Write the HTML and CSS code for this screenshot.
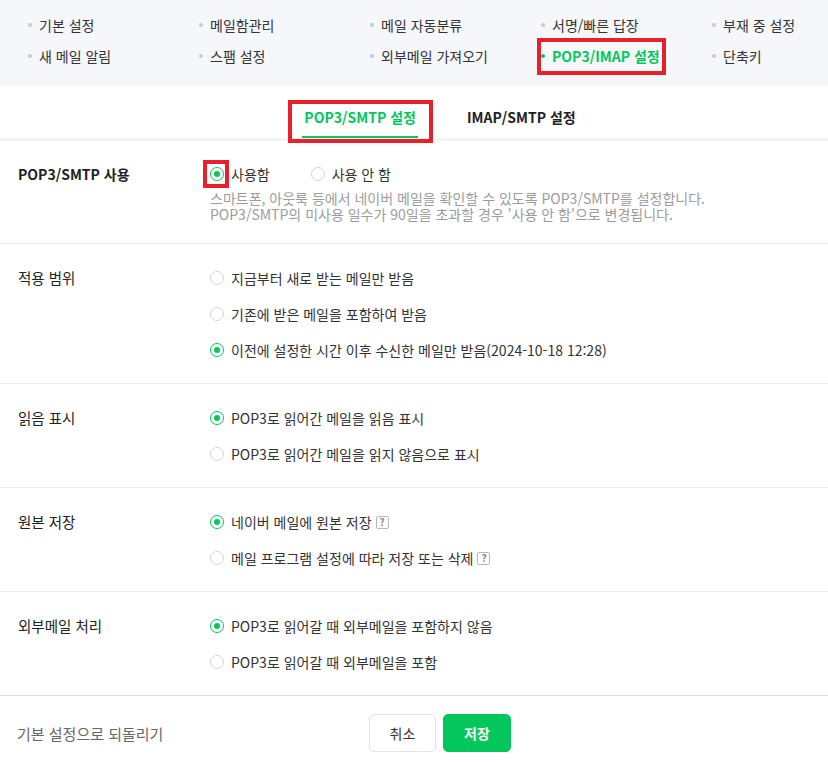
FILE: index.html
```html
<!DOCTYPE html>
<html lang="ko">
<head>
<meta charset="utf-8">
<title>POP3/IMAP 설정</title>
<link rel="stylesheet" href="styles.css">
</head>
<body>
<div class="page">
  <nav class="menu">
    <a class="menu-item">기본 설정</a>
    <a class="menu-item">메일함관리</a>
    <a class="menu-item">메일 자동분류</a>
    <a class="menu-item">서명/빠른 답장</a>
    <a class="menu-item">부재 중 설정</a>
    <a class="menu-item">새 메일 알림</a>
    <a class="menu-item">스팸 설정</a>
    <a class="menu-item">외부메일 가져오기</a>
    <a class="menu-item active marked">POP3/IMAP 설정</a>
    <a class="menu-item">단축키</a>
  </nav>

  <div class="tabs">
    <a class="tab active marked">POP3/SMTP 설정</a>
    <a class="tab">IMAP/SMTP 설정</a>
  </div>

  <section class="row row-first">
    <div class="label label-strong">POP3/SMTP 사용</div>
    <div class="field">
      <div class="inline-options">
        <label class="opt opt-short"><span class="radio on marked"></span><span class="opt-text">사용함</span></label>
        <label class="opt opt-short"><span class="radio"></span><span class="opt-text">사용 안 함</span></label>
      </div>
      <p class="desc">스마트폰, 아웃룩 등에서 네이버 메일을 확인할 수 있도록 POP3/SMTP를 설정합니다.</p>
      <p class="desc">POP3/SMTP의 미사용 일수가 90일을 초과할 경우 '사용 안 함'으로 변경됩니다.</p>
    </div>
  </section>

  <section class="row">
    <div class="label">적용 범위</div>
    <div class="field">
      <label class="opt"><span class="radio"></span><span class="opt-text">지금부터 새로 받는 메일만 받음</span></label>
      <label class="opt"><span class="radio"></span><span class="opt-text">기존에 받은 메일을 포함하여 받음</span></label>
      <label class="opt"><span class="radio on"></span><span class="opt-text">이전에 설정한 시간 이후 수신한 메일만 받음(2024-10-18 12:28)</span></label>
    </div>
  </section>

  <section class="row">
    <div class="label">읽음 표시</div>
    <div class="field">
      <label class="opt"><span class="radio on"></span><span class="opt-text">POP3로 읽어간 메일을 읽음 표시</span></label>
      <label class="opt"><span class="radio"></span><span class="opt-text">POP3로 읽어간 메일을 읽지 않음으로 표시</span></label>
    </div>
  </section>

  <section class="row">
    <div class="label">원본 저장</div>
    <div class="field">
      <label class="opt"><span class="radio on"></span><span class="opt-text">네이버 메일에 원본 저장<i class="help">?</i></span></label>
      <label class="opt"><span class="radio"></span><span class="opt-text">메일 프로그램 설정에 따라 저장 또는 삭제<i class="help">?</i></span></label>
    </div>
  </section>

  <section class="row row-last">
    <div class="label">외부메일 처리</div>
    <div class="field">
      <label class="opt"><span class="radio on"></span><span class="opt-text">POP3로 읽어갈 때 외부메일을 포함하지 않음</span></label>
      <label class="opt"><span class="radio"></span><span class="opt-text">POP3로 읽어갈 때 외부메일을 포함</span></label>
    </div>
  </section>

  <footer class="footer">
    <a class="reset">기본 설정으로 되돌리기</a>
    <div class="buttons">
      <button class="btn">취소</button>
      <button class="btn btn-primary">저장</button>
    </div>
  </footer>
</div>
</body>
</html>
```

FILE: styles.css
```css
html, body {
  margin: 0;
  padding: 0;
}

body {
  width: 828px;
  height: 762px;
  overflow: hidden;
  background: #ffffff;
  font-family: "Noto Sans CJK KR", "Noto Sans", sans-serif;
  color: #333333;
}

.page {
  width: 880px;
}

/* top menu */
.menu {
  display: grid;
  grid-template-columns: repeat(5, 171px);
  row-gap: 11px;
  padding: 15px 0 20px 28px;
  background: #f5f7fa;
}

.menu-item {
  position: relative;
  justify-self: start;
  display: inline-flex;
  align-items: center;
  gap: 7px;
  font-size: 14px;
  line-height: 20px;
  color: #333333;
  white-space: nowrap;
}

.menu-item::before {
  content: "";
  width: 4px;
  height: 4px;
  border-radius: 50%;
  background: #c8cad0;
}

.menu-item.active {
  color: #03c75a;
  font-weight: 700;
}

.menu-item.active::before {
  background: #03c75a;
}

/* red annotation boxes */
.marked::after {
  content: "";
  position: absolute;
  border: 4px solid #e8202a;
  pointer-events: none;
  z-index: 2;
}

.menu-item.marked::after {
  top: -8px;
  bottom: -9px;
  left: -4px;
  right: -6px;
}

/* tabs */
.tabs {
  display: flex;
  justify-content: center;
  gap: 47px;
  border-bottom: 3px solid #f2f3f5;
}

.tab {
  position: relative;
  padding: 21px 2px 11px;
  font-size: 14px;
  line-height: 20px;
  font-weight: 700;
  color: #222222;
}

.tab.active {
  color: #03c75a;
}

.tab.active::before {
  content: "";
  position: absolute;
  left: 0;
  right: 0;
  bottom: 0;
  height: 2px;
  background: #03c75a;
}

.tab.marked::after {
  top: 14px;
  bottom: -5px;
  left: -14px;
  right: -15px;
}

/* setting rows */
.row {
  display: grid;
  grid-template-columns: 192px 1fr;
  padding: 16px 18px 15px;
  border-bottom: 1px solid #ededef;
}

.row-first {
  padding-top: 17px;
  padding-bottom: 21px;
}

.row-last {
  border-bottom-color: #dcdcdc;
}

.label {
  font-size: 14.5px;
  line-height: 36px;
  color: #222222;
}

.label-strong {
  font-size: 14px;
  font-weight: 700;
  line-height: 32px;
}

.field {
  display: flex;
  flex-direction: column;
}

.inline-options {
  display: flex;
  gap: 41px;
}

.opt {
  display: flex;
  align-items: center;
  gap: 7px;
  height: 36px;
  font-size: 14px;
  color: #333333;
  white-space: nowrap;
}

.opt-short {
  height: 32px;
}

.opt-text {
  display: inline-flex;
  align-items: center;
}

.radio {
  position: relative;
  flex: none;
  width: 14px;
  height: 14px;
  box-sizing: border-box;
  border: 1px solid #d3d5dc;
  border-radius: 50%;
  background: #ffffff;
}

.radio.on {
  border: 1.5px solid #03c75a;
}

.radio.on::before {
  content: "";
  position: absolute;
  left: 50%;
  top: 50%;
  width: 6px;
  height: 6px;
  transform: translate(-50%, -50%);
  border-radius: 50%;
  background: #03c75a;
}

.radio.marked::after {
  top: -8px;
  bottom: -8px;
  left: -8px;
  right: -6px;
}

.help {
  display: inline-flex;
  align-items: center;
  justify-content: center;
  width: 13px;
  height: 13px;
  box-sizing: border-box;
  margin-left: 4px;
  border: 1px solid #b8b8b8;
  border-radius: 2px;
  font-size: 10px;
  line-height: 1;
  font-style: normal;
  font-weight: 700;
  color: #888888;
}

.desc {
  margin: 0;
  height: 16px;
  font-size: 14px;
  line-height: 16px;
  color: #9c9c9c;
  white-space: nowrap;
}

/* footer */
.footer {
  display: grid;
  grid-template-columns: 352px auto;
  align-items: center;
  padding: 18px 0 10px 17px;
}

.reset {
  font-size: 15px;
  color: #666666;
}

.buttons {
  display: flex;
  gap: 7px;
}

.btn {
  width: 67px;
  height: 38px;
  box-sizing: border-box;
  border: 1px solid #e3e3e3;
  border-radius: 5px;
  background: #ffffff;
  font-family: inherit;
  font-size: 14px;
  color: #333333;
  padding: 0;
}

.btn-primary {
  width: 68px;
  border-color: #03c75a;
  background: #03c75a;
  color: #ffffff;
  font-weight: 700;
}
```
